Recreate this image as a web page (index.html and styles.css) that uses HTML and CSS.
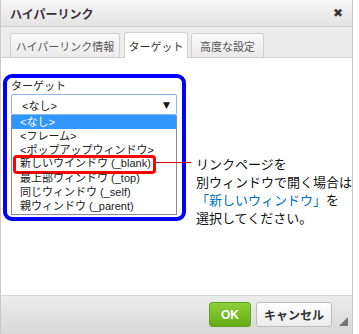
FILE: index.html
```html
<!DOCTYPE html>
<html lang="ja">
<head>
  <meta charset="UTF-8" />
  <title>ハイパーリンク</title>
  <link rel="stylesheet" href="styles.css">
</head>
<body>
  <div class="dialog">
    <div class="titlebar">
      <span class="title">ハイパーリンク</span>
      <span class="close">&#x2716;</span>
    </div>

    <div class="tabs">
      <div class="tab tab-info">ハイパーリンク情報</div>
      <div class="tab tab-active">ターゲット</div>
      <div class="tab tab-adv">高度な設定</div>
    </div>

    <div class="content">
      <div class="row">
        <div class="target-box">
          <div class="label">ターゲット</div>
          <div class="select">
            <span>&lt;なし&gt;</span>
            <span class="arrow">&#x25BC;</span>
          </div>
          <ul class="options">
            <li class="selected">&lt;なし&gt;</li>
            <li>&lt;フレーム&gt;</li>
            <li>&lt;ポップアップウィンドウ&gt;</li>
            <li class="marked">新しいウインドウ (_blank)<span class="mark"></span></li>
            <li>最上部ウィンドウ (_top)</li>
            <li>同じウィンドウ (_self)</li>
            <li>親ウィンドウ (_parent)</li>
          </ul>
        </div>

        <div class="note">
          リンクページを<br>
          別ウィンドウで開く場合は<br>
          <span class="note-blue">「新しいウィンドウ」</span>を<br>
          選択してください。
        </div>
      </div>
      <div class="connector"></div>
    </div>

    <div class="footer">
      <button class="btn btn-ok">OK</button>
      <button class="btn btn-cancel">キャンセル</button>
      <span class="resize"></span>
    </div>
  </div>
</body>
</html>
```

FILE: styles.css
```css
body {
  margin: 0;
  background: #fff;
  font-family: "Liberation Sans", "Noto Sans CJK JP", sans-serif;
}

.dialog {
  width: 351px;
  height: 334px;
  border-left: 1px solid #c9c9c9;
  border-right: 1px solid #c9c9c9;
  display: flex;
  flex-direction: column;
}

.titlebar {
  height: 26px;
  border-bottom: 1px solid #cfcfcf;
  background: linear-gradient(#f7f7f7, #e3e3e3);
  display: flex;
  align-items: center;
  justify-content: space-between;
  padding: 0 9px 0 9px;
}

.title {
  font-size: 12px;
  font-weight: bold;
  color: #3c2f3c;
}

.close {
  font-size: 12px;
  color: #333;
  font-family: "DejaVu Sans", sans-serif;
}

.tabs {
  height: 25px;
  padding: 5px 0 0 9px;
  background: #ececec;
  border-bottom: 1px solid #cfcfcf;
  display: flex;
  gap: 4px;
  align-items: flex-end;
}

.tab {
  height: 24px;
  box-sizing: border-box;
  border: 1px solid #d0d0d0;
  border-bottom: none;
  border-radius: 3px 3px 0 0;
  background: linear-gradient(#fafafa, #eaeaea);
  color: #555;
  font-size: 11px;
  display: flex;
  align-items: center;
  justify-content: center;
}

.tab-info { width: 110px; }
.tab-adv { width: 73px; margin-left: -1px; }

.tab-active {
  width: 64px;
  height: 26px;
  margin-bottom: -1px;
  background: #fff;
  color: #333;
}

.content {
  position: relative;
  flex: 1;
  background: #fff;
  border-bottom: 1px solid #d6d6d6;
}

.row {
  display: flex;
  align-items: flex-start;
  padding: 16px 0 0 2px;
}

.target-box {
  width: 171px;
  border: 4px solid #0000ff;
  border-radius: 9px;
  padding: 1px 5px 2px 4px;
}

.label {
  font-size: 11px;
  line-height: 14px;
  color: #222;
  margin-bottom: 1px;
}

.select {
  height: 19px;
  border: 1px solid #86b7e6;
  border-radius: 2px;
  display: flex;
  align-items: center;
  justify-content: space-between;
  padding: 0 6px 0 10px;
  font-size: 11px;
  color: #222;
}

.arrow {
  font-size: 9px;
  font-family: "DejaVu Sans", sans-serif;
  color: #111;
}

.options {
  list-style: none;
  margin: 0;
  padding: 0 0 1px 0;
  border: 1px solid #8c8c8c;
  border-top: none;
}

.options li {
  position: relative;
  height: 14px;
  line-height: 14px;
  font-size: 11px;
  padding-left: 8px;
  color: #222;
  white-space: nowrap;
}

.options li.marked {
  line-height: 12px;
}

.options li.selected {
  background: #3297fd;
  color: #fff;
}

.mark {
  position: absolute;
  left: 1px;
  top: -2px;
  width: 137px;
  height: 13px;
  border: 3px solid #ff0000;
  border-radius: 4px;
}

.note {
  margin: 81px 0 0 10px;
  font-family: "Noto Sans CJK JP", sans-serif;
  font-size: 13px;
  line-height: 18px;
  color: #111;
  white-space: nowrap;
}

.note-blue {
  color: #0070c0;
}

.connector {
  position: absolute;
  left: 155px;
  top: 104px;
  width: 35px;
  height: 1px;
  background: #e00000;
}

.footer {
  background: linear-gradient(#ececec, #d8d8d8);
  display: flex;
  align-items: flex-start;
  justify-content: flex-end;
  gap: 5px;
  padding: 6px 20px 0 0;
  box-sizing: border-box;
  height: 38px;
  position: relative;
}

.btn {
  height: 25px;
  border-radius: 3px;
  font-family: "Liberation Sans", "Noto Sans CJK JP", sans-serif;
  font-size: 12px;
  font-weight: bold;
  padding: 0;
  cursor: pointer;
}

.btn-ok {
  width: 42px;
  border: 1px solid #5ea51b;
  background: linear-gradient(#8dcf3a, #65ad17);
  color: #fff;
}

.btn-cancel {
  width: 76px;
  border: 1px solid #bdbdbd;
  background: linear-gradient(#ffffff, #ececec);
  color: #333;
}

.resize {
  position: absolute;
  right: 4px;
  bottom: 8px;
  width: 0;
  height: 0;
  border-left: 9px solid transparent;
  border-bottom: 9px solid #777;
}
```
